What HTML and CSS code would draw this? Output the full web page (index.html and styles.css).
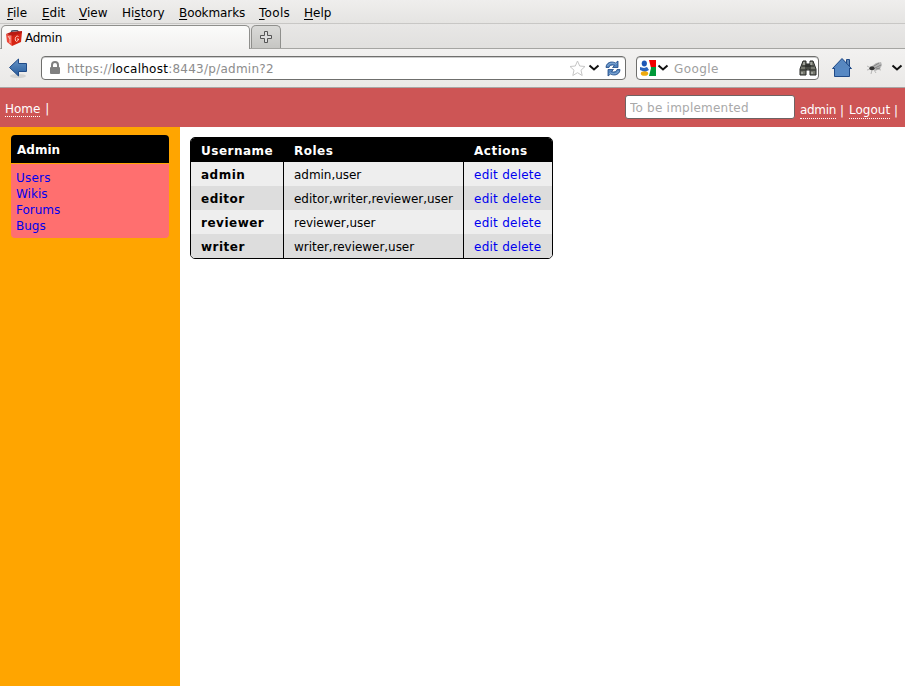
FILE: index.html
```html
<!DOCTYPE html>
<html lang="en">
<head>
<meta charset="utf-8">
<title>Admin</title>
<link rel="stylesheet" href="styles.css">
</head>
<body>
<nav class="menubar">
  <span class="m-file"><u>F</u>ile</span><span class="m-edit"><u>E</u>dit</span><span class="m-view"><u>V</u>iew</span><span class="m-history">Hi<u>s</u>tory</span><span class="m-book"><u>B</u>ookmarks</span><span class="m-tools"><u>T</u>ools</span><span class="m-help"><u>H</u>elp</span>
</nav>
<div class="tabs">
  <div class="tab">
    <svg width="17" height="17" viewBox="0 0 17 17"><path d="M5 3 6 1l5-.5 2 2" fill="none" stroke="#455568" stroke-width="1.500"/><path d="m0 4 6 2v10l-5-4Z" fill="#ed493b"/><path d="m6 5 10-3-1 10-9 4Z" fill="#d52413"/><path d="m0 4 5-2 11-1v2L6 6Z" fill="#b91b12"/><path d="m2 6 2 3V6m0 3v4" stroke="#f7c6bc" fill="none"/><path d="M12.500 6.500c-3-2-4.500 4-2 5l2-1.500V9H11" stroke="#ffd0c6" fill="none"/></svg>
    <span>Admin</span>
  </div>
  <div class="newtab"><svg width="14" height="14" viewBox="0 0 14 14"><path d="M5.500 1.500h3v4h4v3h-4v4h-3v-4h-4v-3h4Z" fill="#ddd" stroke="#555"/></svg></div>
</div>
<div class="toolbar">
  <svg class="back" width="22" height="22" viewBox="0 0 22 22"><ellipse cx="11" cy="19" rx="8" ry="2" fill="#d4d4d2"/><defs><linearGradient id="blue" x2="0" y2="1"><stop stop-color="#6594c7"/><stop offset="1" stop-color="#275b9b"/></linearGradient></defs><path d="M2.500 10.500 11.500 2v4.500h8v8h-8V19Z" fill="url(#blue)" stroke="#204a87"/></svg>
  <div class="url">
    <svg width="12" height="14" viewBox="0 0 12 14"><path d="M3 6V4a3 3 0 0 1 6 0v2" fill="none" stroke="#808080" stroke-width="2"/><rect x="1" y="6" width="10" height="7" rx="1" fill="#808080"/></svg>
    <span class="address">https://<b>localhost</b>:8443/p/admin?2</span>
    <svg class="star" width="17" height="17" viewBox="0 0 17 17"><path d="m8.500 1 2.200 5 5.300.5-4 3.700 1.200 5.300-4.700-2.800-4.700 2.800L5 10.200 1 6.500 6.300 6Z" fill="#fff" stroke="#c6c6c6"/></svg>
    <svg class="chev" width="12" height="8" viewBox="0 0 12 8"><path d="m1.500 1.500 4.500 4 4.500-4" fill="none" stroke="#111" stroke-width="2"/></svg>
    <svg class="reload" width="16" height="17" viewBox="0 0 16 17"><path d="M1 7.500C1 3 6 .5 10.500 3L13 1v6.500H7.500L9.500 5.500C6.500 4.300 4.500 5.500 4 7.500Z" fill="#5484bd" stroke="#204a87" stroke-width=".8"/><path d="M15 9.500C15 14 10 16.500 5.500 14L3 16V9.500h5.500L6.500 11.500c3 1.200 5 0 5.500-2Z" fill="#5484bd" stroke="#204a87" stroke-width=".8"/><path d="M2.500 6C4 3 7.500 2.500 10.500 4l1.500-1M13.500 11c-1.500 3-5 3.500-8 2L4 14" fill="none" stroke="#9bbbe0" stroke-width=".7"/></svg>
  </div>
  <div class="search">
    <svg width="16" height="16" viewBox="0 0 16 16"><path d="M8 0h8v7H9Z" fill="#f00000"/><path d="M9 7h7v9H9Z" fill="#009939"/><path d="M0 0h9l2 8-2 8H0Z" fill="#fff"/><ellipse cx="4.300" cy="3.500" rx="2.600" ry="3" fill="#1d55b5"/><path d="m0 7 4 1 3-1 2 3-4 2-5-2Z" fill="#2c63bd"/><ellipse cx="4.500" cy="13.500" rx="3.700" ry="2.300" fill="#efaa0c"/></svg>
    <svg class="chev" width="12" height="8" viewBox="0 0 12 8"><path d="m1.500 1.500 4.500 4 4.500-4" fill="none" stroke="#111" stroke-width="2"/></svg>
    <span>Google</span>
    <svg class="binoc" width="18" height="16" viewBox="0 0 18 16"><path d="M4 1h3v3h4V1h3l3 8v6h-6v-5H7v5H1V9Z" fill="#77796f" stroke="#252724"/><path d="M1.500 10h5m5 0h5M3 6h12M7 4v6m4-6v6M9 4v5" stroke="#1d1f1d"/><path d="M3 12v2m10-2v2M5 2v3m7-3v3" stroke="#c9cbc5"/></svg>
  </div>
  <svg class="home" width="22" height="22" viewBox="0 0 22 22"><path d="M15.500 2.500h3v8h-3Z" fill="#5e87b7" stroke="#204a87"/><path d="M3.500 10.500v9h15v-9l-7.500-8Z" fill="url(#blue)" stroke="#204a87"/><path d="M1.500 11.500 11 1.500l9.500 10Z" fill="#5787c0" stroke="#204a87"/><path d="M4 11h14v8H4Z" fill="#5788c3"/></svg>
  <svg class="fly" width="18" height="14" viewBox="0 0 18 14"><path d="m5 7-4-2m4 3-4 1m5 0-1 4m3-4 2 3m1-4 4 1" fill="none" stroke="#aaa" stroke-width=".8"/><path d="m6 5 4-3 5-1 1 3-2 4-5 2Z" fill="#b5b5b5"/><path d="m8 5 5-3m-4 5 6-3m-5 4 4-1" stroke="#777" stroke-width=".8"/><ellipse cx="6" cy="7.300" rx="2.600" ry="2" fill="#333"/></svg>
  <svg class="chev" width="12" height="8" viewBox="0 0 12 8"><path d="m1.500 1.500 4.500 4 4.500-4" fill="none" stroke="#111" stroke-width="2"/></svg>
</div>
<header class="site">
  <div class="left"><a>Home</a> <span>|</span></div>
  <input placeholder="To be implemented">
  <div class="right"><a class="user">admin</a><span class="sep">|</span><a>Logout</a><span class="sep">|</span></div>
</header>
<div class="page">
  <aside>
    <h2>Admin</h2>
    <ul><li>Users</li><li>Wikis</li><li>Forums</li><li>Bugs</li></ul>
  </aside>
  <main>
    <table>
      <thead><tr><th>Username</th><th>Roles</th><th>Actions</th></tr></thead>
      <tbody>
        <tr><th>admin</th><td>admin,user</td><td><a>edit</a> <a>delete</a></td></tr>
        <tr><th>editor</th><td>editor,writer,reviewer,user</td><td><a>edit</a> <a>delete</a></td></tr>
        <tr><th>reviewer</th><td>reviewer,user</td><td><a>edit</a> <a>delete</a></td></tr>
        <tr><th>writer</th><td>writer,reviewer,user</td><td><a>edit</a> <a>delete</a></td></tr>
      </tbody>
    </table>
  </main>
</div>
</body>
</html>
```

FILE: styles.css
```css
* { box-sizing: border-box; }
body { margin: 0; height: 686px; overflow: hidden; font: 12px/16px "DejaVu Sans", sans-serif; color: #000; background: #fff; display: flex; flex-direction: column; }
svg { display: block; flex: none; }
.menubar { height: 24px; flex: none; padding: 5px 0 0 7px; display: flex; background: linear-gradient(#efeeed, #e5e4e2); border-bottom: 1px solid #c8c7c5; white-space: nowrap; }
.menubar u { text-underline-offset: 2px; }
.m-file { width: 35px; }
.m-edit { width: 37px; }
.m-view { width: 43px; }
.m-history { width: 57px; }
.m-book { width: 80px; letter-spacing: -.1px; }
.m-tools { width: 45px; letter-spacing: .3px; }
.tabs { height: 25px; flex: none; display: flex; background: linear-gradient(#e8e7e6, #e1e0de); border-bottom: 1px solid #a5a5a2; }
.tab { width: 249px; height: 25px; flex: none; margin: 1px 1px -1px 1px; border: 1px solid #8f8f8c; border-bottom: 0; border-radius: 5px 5px 0 0; background: linear-gradient(#fbfbfa, #f2f1f0); display: flex; align-items: center; padding: 0 0 0 4px; gap: 2px; letter-spacing: -.25px; }
.newtab { width: 30px; height: 23px; margin-top: 1px; border: 1px solid #8f8f8c; border-bottom: 0; border-radius: 5px 5px 0 0; background: linear-gradient(#dadad8, #c6c6c3); padding: 4px 0 0 7px; }
.toolbar { height: 39px; flex: none; display: flex; align-items: center; background: linear-gradient(#f2f1f0, #eae9e7); border-bottom: 1px solid #a9a5a4; }
.back { margin: 0 12px 0 7px; }
.url, .search { height: 24px; border: 1px solid #6f6f6d; border-radius: 4px; background: #fff; display: flex; align-items: center; color: #8c8c8c; box-shadow: inset 0 1px #ccc; }
.url { width: 585px; padding: 0 4px 0 7px; }
.address { flex: 1; margin-left: 6px; padding-top: 2px; letter-spacing: .25px; }
.address b { font-weight: normal; color: #000; }
.url .chev { margin: 0 5px 0 2px; }
.search { width: 183px; margin-left: 10px; padding: 0 1px 0 3px; color: #a0a0a0; }
.search .chev { margin: 0 5px 0 1px; }
.search span { flex: 1; padding-top: 2px; letter-spacing: .4px; }
.home { margin-left: 12px; }
.fly { margin: 0 7px 0 13px; }
.site { height: 39px; flex: none; background: #cd5555; color: #fff; display: flex; padding: 0 5px; white-space: nowrap; }
.site a { border-bottom: 1px dotted #fff; }
.left { padding-top: 13px; flex: 1; }
.left span { margin-left: 1px; }
.right { padding-top: 14px; width: 100px; display: flex; align-items: flex-start; }
.right a { height: 17px; line-height: 16px; }
.right .user { letter-spacing: -.3px; width: 36px; }
.sep { width: 13px; padding-left: 4px; line-height: 18px; flex: none; }
.site input { width: 170px; height: 24px; margin: 7px 5px 0 0; padding: 2px 4px 0; border: 1px solid #6f6262; border-radius: 3px; background: #fff; font: inherit; letter-spacing: .22px; }
.site input::placeholder { color: #a9a9a9; opacity: 1; }
.page { flex: 1; display: flex; }
aside { width: 180px; background: #ffa500; padding: 8px 11px; }
aside h2 { margin: 0 0 1px; height: 28px; padding: 7px 6px; font-size: 12px; line-height: 16px; color: #fff; background: #000; border-radius: 4px 4px 0 0; }
aside ul { margin: 0; padding: 6px 5px 4px; height: 74px; list-style: none; background: #ff6f6f; color: #00e; border-radius: 0 0 4px 4px; }
aside li:first-child { letter-spacing: .2px; }
main { padding: 10px; }
table { width: 363px; table-layout: fixed; border: 1px solid #000; border-radius: 5px; border-spacing: 0; overflow: hidden; text-align: left; }
th, td { height: 24px; padding: 2px 0 0 10px; white-space: nowrap; }
th { letter-spacing: .5px; }
thead th + th { border-left: 1px solid #000; }
th:nth-child(1) { width: 92px; }
th:nth-child(2) { width: 180px; }
thead th { background: #000; color: #fff; }
td { border-left: 1px solid #000; letter-spacing: -.04px; }
td:last-child { letter-spacing: .25px; }
tbody tr:nth-child(odd) { background: #eee; }
tbody tr:nth-child(even) { background: #ddd; }
td a { color: #00e; }
```
